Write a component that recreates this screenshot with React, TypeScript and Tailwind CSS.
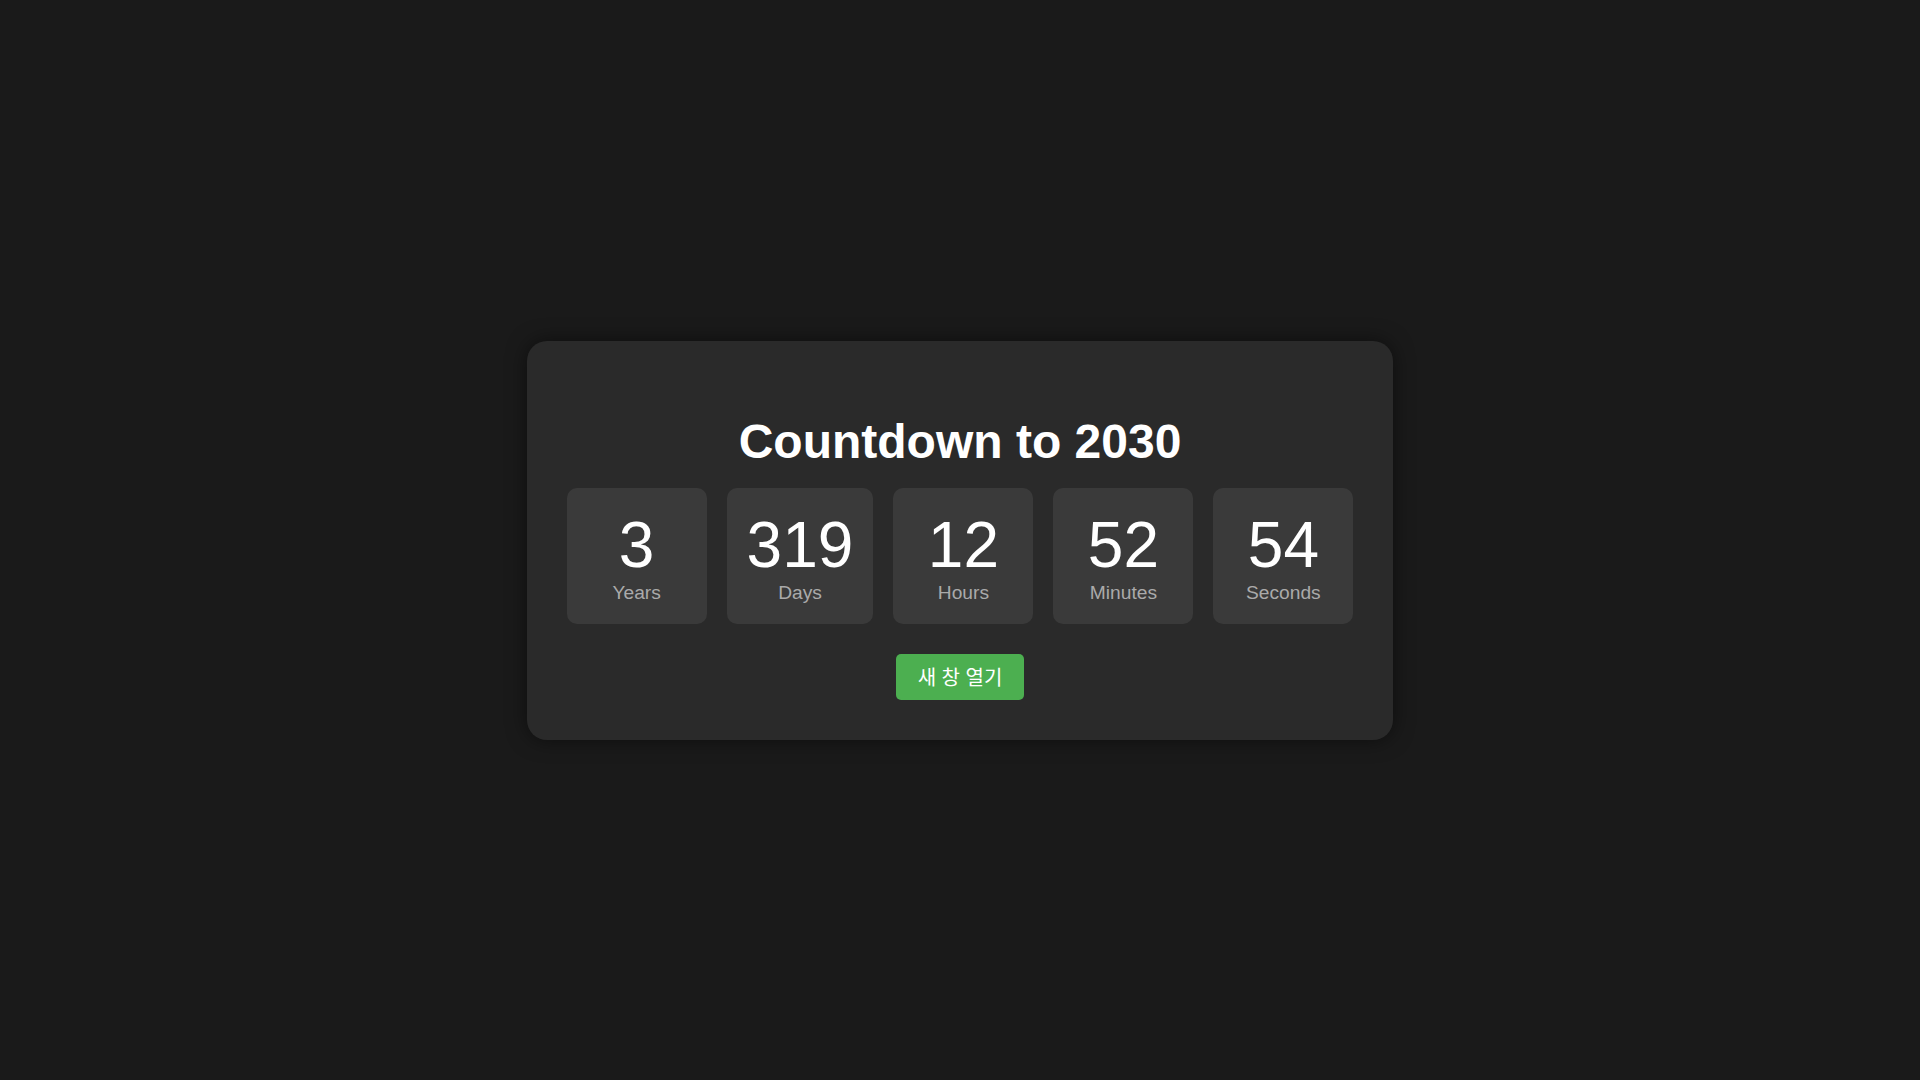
import React from 'react';

const units = [
  { value: '3', label: 'Years' },
  { value: '319', label: 'Days' },
  { value: '12', label: 'Hours' },
  { value: '52', label: 'Minutes' },
  { value: '54', label: 'Seconds' },
];

export default function App() {
  return (
    <div className="min-h-screen w-full flex items-center justify-center bg-[#1a1a1a] font-['Liberation_Sans','Noto_Sans_CJK_KR',sans-serif] text-white">
      <div className="w-fit rounded-[20px] bg-[#2a2a2a] p-10 shadow-[0_0_20px_rgba(0,0,0,0.5)] flex flex-col items-center">
        {/* Title */}
        <h1 className="mt-[33px] mb-[19px] text-[48px] leading-[55px] font-bold">Countdown to 2030</h1>

        {/* Counters */}
        <div className="flex gap-5">
          {units.map((u) => (
            <div
              key={u.label}
              className="min-w-[140px] h-[136px] rounded-[10px] bg-[#3a3a3a] p-5 flex flex-col items-center"
            >
              <span className="text-[64px] leading-[74px]">{u.value}</span>
              <span className="text-[19.2px] leading-[22px] text-[#aaaaaa]">{u.label}</span>
            </div>
          ))}
        </div>

        {/* Action */}
        <button className="mt-[30px] h-[46px] w-[128px] rounded-[5px] bg-[#4caf50] pt-[2px] text-[20px] text-white">
          새 창 열기
        </button>
      </div>
    </div>
  );
}
